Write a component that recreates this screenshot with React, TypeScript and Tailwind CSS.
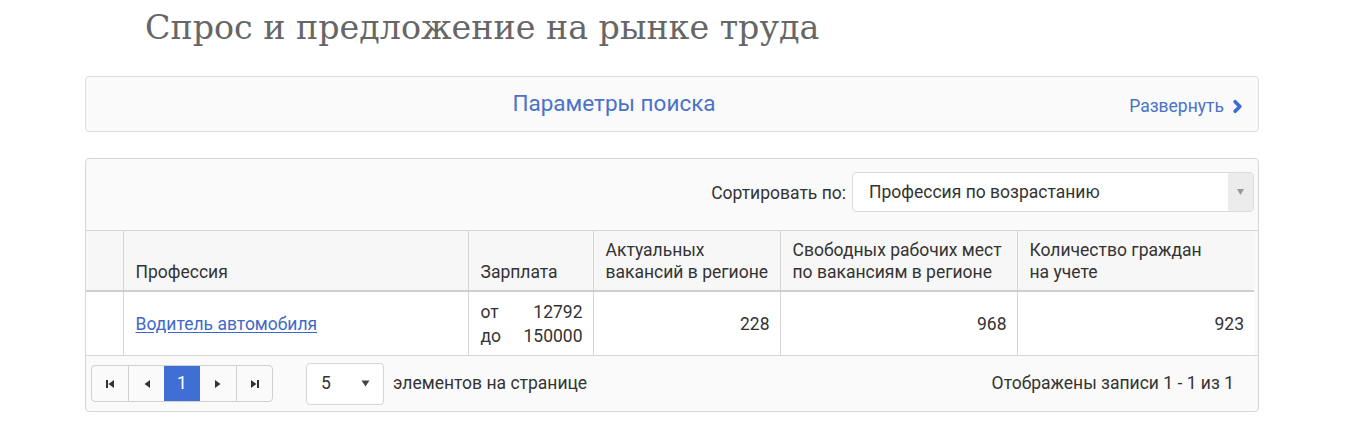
import { ChevronRight } from 'lucide-react';

const cols = ['w-[37px]', 'w-[345px]', 'w-[125px]', 'w-[187px]', 'w-[237px]', 'w-[237px]'];

const PagerIcon = ({ kind }: { kind: 'first' | 'prev' | 'next' | 'last' }) => {
  if (kind === 'first')
    return (
      <svg width="10" height="10" viewBox="0 0 10 10">
        <rect x="1" y="1" width="2" height="8" fill="#333" />
        <path d="M9 1 L3.5 5 L9 9 Z" fill="#333" />
      </svg>
    );
  if (kind === 'last')
    return (
      <svg width="10" height="10" viewBox="0 0 10 10">
        <rect x="7" y="1" width="2" height="8" fill="#333" />
        <path d="M1 1 L6.5 5 L1 9 Z" fill="#333" />
      </svg>
    );
  if (kind === 'prev')
    return (
      <svg width="8" height="10" viewBox="0 0 8 10">
        <path d="M7 1 L1.5 5 L7 9 Z" fill="#333" />
      </svg>
    );
  return (
    <svg width="8" height="10" viewBox="0 0 8 10">
      <path d="M1 1 L6.5 5 L1 9 Z" fill="#333" />
    </svg>
  );
};

const Arrow = () => (
  <svg width="9" height="7" viewBox="0 0 9 7">
    <path d="M0.5 0.5 L8.5 0.5 L4.5 6.5 Z" fill="#444" />
  </svg>
);

export default function App() {
  return (
    <div className="w-[1347px] h-[427px] bg-white text-[17.5px] text-[#333] font-['Roboto',sans-serif]">
      <div className="h-[76px] pl-[145px] pt-[6px]">
        <h1 className="text-[33.3px] leading-[44px] text-[#666] font-['DejaVu_Serif',serif]">
          Спрос и предложение на рынке труда
        </h1>
      </div>

      <div className="ml-[85px] w-[1174px]">
        {/* search params */}
        <div className="relative flex h-[56px] items-center rounded-[4px] border border-[#dedede] bg-[#fafafa]">
          <div className="w-[1056px] text-center text-[22.5px] text-[#4a72c9]">Параметры поиска</div>
          <a className="absolute right-[11px] top-[16px] flex items-center gap-[4px] text-[17.5px] text-[#4a72c9]">
            Развернуть
            <ChevronRight size={19} strokeWidth={4.5} className="text-[#3d6ad6]" />
          </a>
        </div>

        {/* grid */}
        <div className="mt-[26px] overflow-hidden rounded-[4px] border border-[#d6d6d6] bg-[#fafafa]">
          <div className="flex h-[71px] items-start justify-end pr-[4px] pt-[13px]">
            <span className="mr-[6px] mt-[8px] text-[#333]">Сортировать по:</span>
            <div className="flex h-[40px] w-[402px] items-stretch overflow-hidden rounded-[4px] border border-[#dcdcdc] bg-white">
              <span className="flex flex-1 items-center pl-[16px] text-[#333]">Профессия по возрастанию</span>
              <span className="flex w-[25px] items-center justify-center bg-[#ececec]">
                <svg width="7" height="6" viewBox="0 0 7 6">
                  <path d="M0 0 L7 0 L3.5 6 Z" fill="#999" />
                </svg>
              </span>
            </div>
          </div>

          <div className="border-t border-[#d6d6d6] pr-[5px]">
            <table className="w-[1168px] table-fixed border-collapse">
              <colgroup>
                {cols.map((c, i) => (
                  <col key={i} className={c} />
                ))}
              </colgroup>
              <thead>
                <tr className="h-[60px] border-b-2 border-[#cfcfcf] bg-[#f7f7f7] align-bottom text-left leading-[22px] font-normal">
                  <th className="font-normal" />
                  <th className="border-l border-[#d6d6d6] px-[12px] pb-[7px] font-normal">Профессия</th>
                  <th className="border-l border-[#d6d6d6] px-[12px] pb-[7px] font-normal">Зарплата</th>
                  <th className="border-l border-[#d6d6d6] pl-[12px] pr-[4px] pb-[7px] font-normal">
                    Актуальных
                    <br />
                    вакансий в регионе
                  </th>
                  <th className="border-l border-[#d6d6d6] px-[12px] pb-[7px] font-normal">
                    Свободных рабочих мест
                    <br />
                    по вакансиям в регионе
                  </th>
                  <th className="border-l border-[#d6d6d6] px-[12px] pb-[7px] font-normal">
                    Количество граждан
                    <br />
                    на учете
                  </th>
                </tr>
              </thead>
              <tbody>
                <tr className="h-[64px] bg-white leading-[24px]">
                  <td />
                  <td className="border-l border-[#d6d6d6] px-[12px]">
                    <a className="text-[#3f69c8] underline underline-offset-[2px]">Водитель автомобиля</a>
                  </td>
                  <td className="border-l border-[#d6d6d6] pl-[12px] pr-[10px]">
                    <div className="flex justify-between">
                      <span>от</span>
                      <span>12792</span>
                    </div>
                    <div className="flex justify-between">
                      <span>до</span>
                      <span>150000</span>
                    </div>
                  </td>
                  <td className="border-l border-[#d6d6d6] px-[10px] text-right">228</td>
                  <td className="border-l border-[#d6d6d6] px-[10px] text-right">968</td>
                  <td className="border-l border-[#d6d6d6] px-[10px] text-right">923</td>
                </tr>
              </tbody>
            </table>
          </div>

          <div className="flex h-[56px] items-center border-t border-[#d6d6d6] pl-[5px] pr-[24px]">
            <div className="flex h-[37px] overflow-hidden rounded-[4px] border border-[#d0d0d0]">
              <button className="flex w-[36px] items-center justify-center">
                <PagerIcon kind="first" />
              </button>
              <button className="flex w-[36px] items-center justify-center border-l border-[#d0d0d0]">
                <PagerIcon kind="prev" />
              </button>
              <button className="flex w-[36px] items-center justify-center bg-[#3f6fd3] text-white">1</button>
              <button className="flex w-[36px] items-center justify-center">
                <PagerIcon kind="next" />
              </button>
              <button className="flex w-[36px] items-center justify-center border-l border-[#d0d0d0]">
                <PagerIcon kind="last" />
              </button>
            </div>
            <div className="ml-[33px] flex h-[42px] w-[78px] items-center justify-between rounded-[4px] border border-[#d6d6d6] bg-white pl-[14px] pr-[13px]">
              <span>5</span>
              <Arrow />
            </div>
            <span className="ml-[9px]">элементов на странице</span>
            <span className="ml-auto">Отображены записи 1 - 1 из 1</span>
          </div>
        </div>
      </div>
    </div>
  );
}
